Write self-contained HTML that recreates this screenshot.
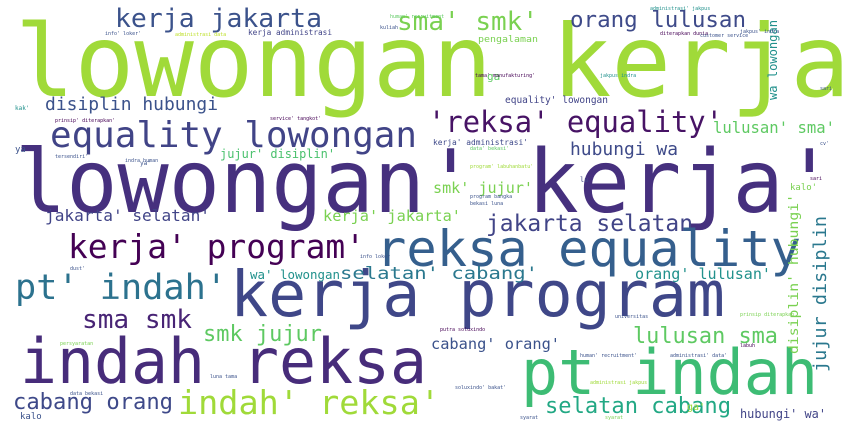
<!DOCTYPE html>
<html><head><meta charset="utf-8"><style>
html,body{margin:0;padding:0;background:#fff;}
svg{display:block;}
text{font-family:"DejaVu Sans Mono","Liberation Mono",monospace;}
</style></head><body>
<svg width="856" height="432" viewBox="0 0 856 432" xmlns="http://www.w3.org/2000/svg">
<rect width="856" height="432" fill="#fff"/>
<g lengthAdjust="spacingAndGlyphs">
<!-- big words -->
<text x="15" y="96" font-size="100" fill="#a0da39" textLength="835" lengthAdjust="spacingAndGlyphs">lowongan kerja</text>
<text x="15" y="212" font-size="87" fill="#46307e" textLength="820" lengthAdjust="spacingAndGlyphs">lowongan' kerja'</text>
<text x="115" y="27" font-size="26" fill="#3b528b" textLength="207" lengthAdjust="spacingAndGlyphs">kerja jakarta</text>
<text x="397" y="30" font-size="26" fill="#7ad151" textLength="141" lengthAdjust="spacingAndGlyphs">sma' smk'</text>
<text x="570" y="27" font-size="22" fill="#3e4a89" textLength="176" lengthAdjust="spacingAndGlyphs">orang lulusan</text>
<text x="45" y="110" font-size="18" fill="#3b528b" textLength="173" lengthAdjust="spacingAndGlyphs">disiplin hubungi</text>
<text x="50" y="147" font-size="36" fill="#414487" textLength="367" lengthAdjust="spacingAndGlyphs">equality lowongan</text>
<text x="428" y="132" font-size="29" fill="#471365" textLength="295" lengthAdjust="spacingAndGlyphs">'reksa' equality'</text>
<text x="220" y="158" font-size="12" fill="#4ac16d" textLength="115" lengthAdjust="spacingAndGlyphs">jujur' disiplin'</text>
<text x="713" y="133" font-size="16" fill="#5ec962" textLength="122" lengthAdjust="spacingAndGlyphs">lulusan' sma'</text>
<text x="570" y="155" font-size="18" fill="#3e4a89" textLength="108" lengthAdjust="spacingAndGlyphs">hubungi wa</text>
<text transform="translate(777,100) rotate(-90)" font-size="12" fill="#21918c" textLength="80" lengthAdjust="spacingAndGlyphs">wa lowongan</text>
<text x="505" y="103" font-size="10" fill="#414487" textLength="103" lengthAdjust="spacingAndGlyphs">equality' lowongan</text>
<text x="478" y="42" font-size="9" fill="#7ad151" textLength="60" lengthAdjust="spacingAndGlyphs">pengalaman</text>
<text x="433" y="193" font-size="15" fill="#7ad151" textLength="100" lengthAdjust="spacingAndGlyphs">smk' jujur'</text>
<text x="45" y="221" font-size="16" fill="#414487" textLength="165" lengthAdjust="spacingAndGlyphs">jakarta' selatan'</text>
<text x="323" y="221" font-size="15" fill="#7ad151" textLength="138" lengthAdjust="spacingAndGlyphs">kerja' jakarta'</text>
<text x="486" y="231" font-size="23" fill="#414487" textLength="207" lengthAdjust="spacingAndGlyphs">jakarta selatan</text>
<text x="68" y="258" font-size="33" fill="#440154" textLength="297" lengthAdjust="spacingAndGlyphs">kerja' program'</text>
<text x="376" y="266" font-size="50" fill="#355f8d" textLength="425" lengthAdjust="spacingAndGlyphs">reksa equality</text>
<text x="15" y="299" font-size="35" fill="#2c728e" textLength="212" lengthAdjust="spacingAndGlyphs">pt' indah'</text>
<text x="230" y="316" font-size="63" fill="#3f4788" textLength="495" lengthAdjust="spacingAndGlyphs">kerja program</text>
<text x="82" y="328" font-size="26" fill="#482475" textLength="110" lengthAdjust="spacingAndGlyphs">sma smk</text>
<text x="203" y="341" font-size="22" fill="#5ec962" textLength="119" lengthAdjust="spacingAndGlyphs">smk jujur</text>
<text x="250" y="279" font-size="12.5" fill="#21918c" textLength="90" lengthAdjust="spacingAndGlyphs">wa' lowongan</text>
<text x="340" y="279" font-size="17" fill="#2a788e" textLength="198" lengthAdjust="spacingAndGlyphs">selatan' cabang'</text>
<text x="635" y="279" font-size="15" fill="#21918c" textLength="136" lengthAdjust="spacingAndGlyphs">orang' lulusan'</text>
<text x="20" y="383" font-size="62" fill="#472c7a" textLength="407" lengthAdjust="spacingAndGlyphs">indah reksa</text>
<text x="521" y="394" font-size="62" fill="#3dbc74" textLength="297" lengthAdjust="spacingAndGlyphs">pt indah</text>
<text x="13" y="409" font-size="22" fill="#3e4989" textLength="160" lengthAdjust="spacingAndGlyphs">cabang orang</text>
<text x="178" y="414" font-size="33" fill="#a0da39" textLength="262" lengthAdjust="spacingAndGlyphs">indah' reksa'</text>
<text x="633" y="343" font-size="22" fill="#5ec962" textLength="145" lengthAdjust="spacingAndGlyphs">lulusan sma</text>
<text x="431" y="349" font-size="15" fill="#3b528b" textLength="129" lengthAdjust="spacingAndGlyphs">cabang' orang'</text>
<text x="545" y="413" font-size="22" fill="#22a884" textLength="186" lengthAdjust="spacingAndGlyphs">selatan cabang</text>
<text x="740" y="418" font-size="12" fill="#414487" textLength="86" lengthAdjust="spacingAndGlyphs">hubungi' wa'</text>
<text transform="translate(826,372) rotate(-90)" font-size="18" fill="#2a788e" textLength="156" lengthAdjust="spacingAndGlyphs">jujur disiplin</text>
<text transform="translate(798,354) rotate(-90)" font-size="13" fill="#7ad151" textLength="160" lengthAdjust="spacingAndGlyphs">disiplin' hubungi'</text>
<!-- small words -->
<text x="248" y="35" font-size="8" fill="#414487" textLength="84" lengthAdjust="spacingAndGlyphs">kerja administrasi</text>
<text x="433" y="145" font-size="8" fill="#3e4989" textLength="95" lengthAdjust="spacingAndGlyphs">kerja' administrasi'</text>
<text x="487" y="80" font-size="11" fill="#5ec962">ga</text>
<text x="687" y="410" font-size="10" fill="#a0da39">ga'</text>
<text x="790" y="190" font-size="9" fill="#7ad151">kalo'</text>
<text x="20" y="419" font-size="9" fill="#3b528b">kalo</text>
<text x="15" y="152" font-size="9" fill="#3b528b">ya</text>
<text x="15" y="110" font-size="6" fill="#21918c">kak'</text>
<text x="580" y="182" font-size="7" fill="#414487">lu</text>
<text x="140" y="165" font-size="6" fill="#3b528b">ya' </text>
<text x="105" y="35" font-size="5" fill="#3b528b">info' loker'</text>
<text x="175" y="36" font-size="5" fill="#bddf26">administrasi data</text>
<text x="660" y="35" font-size="5" fill="#440154">diterapkan dunia</text>
<text x="700" y="37" font-size="5" fill="#3b528b">customer service</text>
<text x="740" y="33" font-size="5" fill="#3b528b">jakpus' indra</text>
<text x="650" y="10" font-size="5" fill="#21918c">administrasi' jakpus</text>
<text x="475" y="77" font-size="5" fill="#440154">tama' manufakturing'</text>
<text x="600" y="77" font-size="5" fill="#21918c">jakpus indra</text>
<text x="55" y="122" font-size="5" fill="#440154">prinsip' diterapkan'</text>
<text x="270" y="120" font-size="5" fill="#440154">service' tangkot'</text>
<text x="55" y="158" font-size="5" fill="#3b528b">tersendiri'</text>
<text x="125" y="162" font-size="5" fill="#3b528b">indra human</text>
<text x="470" y="150" font-size="5" fill="#5ec962">data' bekasi'</text>
<text x="470" y="168" font-size="5" fill="#a0da39">program' labuhanbatu'</text>
<text x="470" y="198" font-size="5" fill="#3b528b">program bangka</text>
<text x="470" y="205" font-size="5" fill="#3b528b">bekasi luna</text>
<text x="390" y="18" font-size="5" fill="#5ec962">human' recruitment</text>
<text x="380" y="29" font-size="5" fill="#3b528b">kuliah</text>
<text x="360" y="258" font-size="5" fill="#3b528b">info loker</text>
<text x="440" y="331" font-size="5" fill="#440154">putra soluxindo</text>
<text x="455" y="389" font-size="5" fill="#3b528b">soluxindo' bakat'</text>
<text x="580" y="357" font-size="5" fill="#3b528b">human' recruitment'</text>
<text x="670" y="357" font-size="5" fill="#3b528b">administrasi' data'</text>
<text x="590" y="384" font-size="5" fill="#a0da39">administrasi jakpus</text>
<text x="615" y="318" font-size="5" fill="#3b528b">universitas</text>
<text x="740" y="316" font-size="5" fill="#7ad151">prinsip diterapkan</text>
<text x="520" y="419" font-size="5" fill="#3b528b">syarat</text>
<text x="605" y="419" font-size="5" fill="#7ad151">syarat</text>
<text x="70" y="270" font-size="5" fill="#3b528b">dust'</text>
<text x="60" y="345" font-size="5" fill="#7ad151">persyaratan</text>
<text x="210" y="378" font-size="5" fill="#3b528b">luna tama</text>
<text x="70" y="395" font-size="5" fill="#3b528b">data bekasi</text>
<text x="740" y="347" font-size="5" fill="#440154">labuh</text>
<text x="820" y="90" font-size="5" fill="#3b528b">sari</text>
<text x="810" y="180" font-size="5" fill="#440154">sari</text>
<text x="820" y="145" font-size="5" fill="#3b528b">cv'</text>
</g>
</svg>
</body></html>
